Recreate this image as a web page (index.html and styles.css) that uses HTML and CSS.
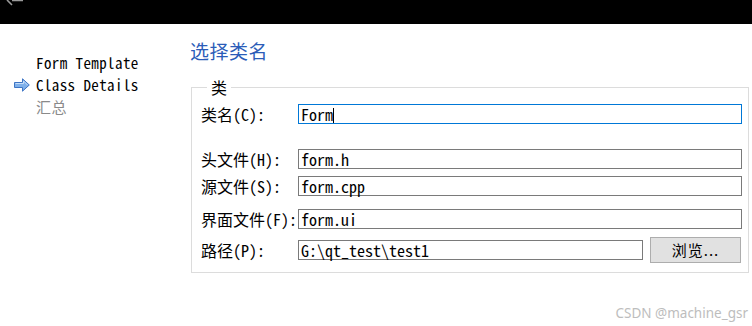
FILE: index.html
```html
<!DOCTYPE html>
<html>
<head lang="zh">
    <meta charset="UTF-8">
    <title>Qt Class Wizard</title>
    <link rel="stylesheet" href="styles.css">
</head>
<body>
<div class="topbar">
    <svg class="back" width="24" height="8" viewBox="0 0 24 8">
        <path d="M7 0 L12 5 M12 0.5 L23 0.5" stroke="#9a9a9a" stroke-width="1.6" fill="none"/>
    </svg>
</div>
<div class="wizard">
    <ul class="steps">
        <li><span class="mark"></span>Form Template</li>
        <li class="current">
            <span class="mark">
                <svg width="16" height="14" viewBox="0 0 16 14">
                    <path d="M0.5 4.5 H8.5 V0.8 L15.3 7 L8.5 13.2 V9.5 H0.5 Z" fill="#7fb0ea" stroke="#3d74c4" stroke-width="1"/>
                    <path d="M1.5 5.5 H9.5 V3 L13.5 7" fill="none" stroke="#c6defa" stroke-width="1"/>
                </svg>
            </span>Class Details
        </li>
        <li class="todo"><span class="mark"></span>汇总</li>
    </ul>
    <div class="page">
        <div class="page-title">选择类名</div>
        <fieldset class="group">
            <legend>类</legend>
            <div class="row first">
                <label>类名(C):</label>
                <div class="field focus">Form<span class="caret"></span></div>
            </div>
            <div class="row gap-lg">
                <label>头文件(H):</label>
                <div class="field">form.h</div>
            </div>
            <div class="row gap-sm">
                <label>源文件(S):</label>
                <div class="field">form.cpp</div>
            </div>
            <div class="row gap-md">
                <label>界面文件(F):</label>
                <div class="field">form.ui</div>
            </div>
            <div class="row path">
                <label>路径(P):</label>
                <div class="field short">G:\qt_test\test1</div>
                <a class="browse">浏览...</a>
            </div>
        </fieldset>
    </div>
</div>
<div class="watermark">CSDN @machine_gsr</div>
</body>
</html>
```

FILE: styles.css
```css
* {
    margin: 0;
    padding: 0;
    box-sizing: border-box;
}

body {
    width: 752px;
    height: 326px;
    background: #fff;
    color: #000;
    font-family: "Noto Sans Mono CJK SC", "Noto Sans CJK SC", "Liberation Mono", monospace;
    font-size: 16px;
    line-height: 20px;
    overflow: hidden;
    position: relative;
}

.topbar {
    height: 24px;
    background: #000;
}

.back {
    display: block;
}

.wizard {
    display: flex;
}

.steps {
    list-style: none;
    width: 190px;
    padding: 28px 0 0 14px;
}

.steps li {
    display: flex;
    align-items: center;
    height: 22px;
    font-size: 15px;
    letter-spacing: 0.4px;
    line-height: 20px;
    white-space: nowrap;
}

.steps .mark {
    width: 22px;
    height: 14px;
    flex: none;
}

.steps .mark svg {
    display: block;
}

.steps .todo {
    color: #8a8a8a;
}

.page {
    flex: 1;
    padding-top: 14px;
}

.page-title {
    font-family: "Noto Sans CJK SC", sans-serif;
    font-size: 19px;
    line-height: 26px;
    color: #2b5cb8;
    letter-spacing: 0.5px;
}

.group {
    margin: 14px 3px 0 1px;
    border: 1px solid #dcdcdc;
    padding: 0 5px 9px 9px;
}

.group legend {
    margin-left: 6px;
    padding: 0 4px;
    line-height: 18px;
}

.row {
    display: flex;
    align-items: center;
    height: 20px;
}

.row label {
    width: 97px;
    flex: none;
    white-space: nowrap;
}

.row.first {
    margin-top: 8px;
}

.row.gap-lg {
    margin-top: 25px;
}

.row.gap-sm {
    margin-top: 7px;
}

.row.gap-md {
    margin-top: 13px;
}

.row.path {
    height: 26px;
    margin-top: 8px;
}

.field {
    width: 444px;
    height: 20px;
    border: 1px solid #7a7a7a;
    line-height: 18px;
    padding-left: 2px;
    white-space: nowrap;
}

.field.focus {
    border-color: #0078d7;
}

.field.short {
    width: 345px;
}

.caret {
    display: inline-block;
    width: 1px;
    height: 15px;
    background: #000;
    vertical-align: -2px;
}

.browse {
    display: inline-block;
    width: 91px;
    height: 26px;
    margin-left: 7px;
    line-height: 24px;
    text-align: center;
    background: #e1e1e1;
    border: 1px solid #adadad;
    font-family: "Noto Sans CJK SC", sans-serif;
    font-size: 15px;
    letter-spacing: 1px;
}

.watermark {
    position: absolute;
    right: 4px;
    top: 303px;
    font-family: "Noto Sans", "Liberation Sans", sans-serif;
    font-size: 13.5px;
    color: #bdbdbd;
}
```
